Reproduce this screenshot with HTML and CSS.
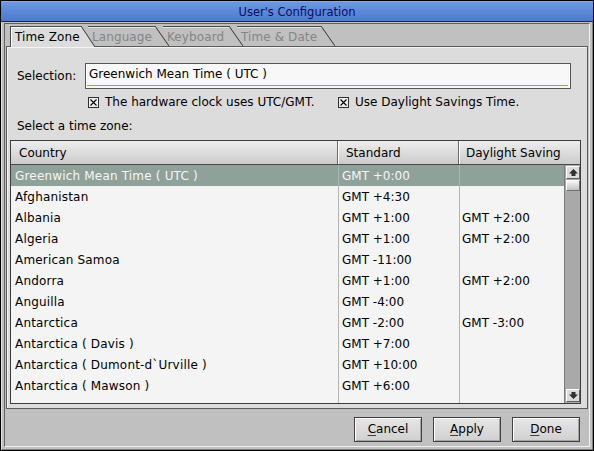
FILE: index.html
```html
<!DOCTYPE html>
<html>
<head>
<meta charset="utf-8">
<link rel="stylesheet" href="styles.css">
</head>
<body>
<div class="window">
  <div class="titlebar">User's Configuration</div>
  <div class="client">
    <div class="inner">
      <div class="tabs">
        <div class="tab active t1">Time Zone</div>
        <div class="tab t2">Language</div>
        <div class="tab t3">Keyboard</div>
        <div class="tab t4">Time &amp; Date</div>
      </div>
      <div class="panel">
        <div class="sel-row">
          <span class="label">Selection:</span>
          <div class="field"><div class="field-in">Greenwich Mean Time ( UTC )</div></div>
        </div>
        <div class="checks">
          <div class="check">
            <svg class="box" width="11" height="11" viewBox="0 0 11 11"><rect x="0.5" y="0.5" width="10" height="10" fill="#eeeeee" stroke="#303030"/><path d="M2.5 2.5 L8.5 8.5 M8.5 2.5 L2.5 8.5" stroke="#000" stroke-width="1.1"/></svg>
            <span>The hardware clock uses UTC/GMT.</span>
          </div>
          <div class="check">
            <svg class="box" width="11" height="11" viewBox="0 0 11 11"><rect x="0.5" y="0.5" width="10" height="10" fill="#eeeeee" stroke="#303030"/><path d="M2.5 2.5 L8.5 8.5 M8.5 2.5 L2.5 8.5" stroke="#000" stroke-width="1.1"/></svg>
            <span>Use Daylight Savings Time.</span>
          </div>
        </div>
        <div class="caption">Select a time zone:</div>
        <div class="table">
          <div class="thead">
            <div class="th c1">Country</div>
            <div class="th c2">Standard</div>
            <div class="th c3">Daylight Saving</div>
          </div>
          <div class="tbody">
            <div class="rows">
              <div class="row sel"><div class="td c1">Greenwich Mean Time ( UTC )</div><div class="td c2">GMT +0:00</div><div class="td c3"></div></div>
              <div class="row"><div class="td c1">Afghanistan</div><div class="td c2">GMT +4:30</div><div class="td c3"></div></div>
              <div class="row"><div class="td c1">Albania</div><div class="td c2">GMT +1:00</div><div class="td c3">GMT +2:00</div></div>
              <div class="row"><div class="td c1">Algeria</div><div class="td c2">GMT +1:00</div><div class="td c3">GMT +2:00</div></div>
              <div class="row"><div class="td c1">American Samoa</div><div class="td c2">GMT -11:00</div><div class="td c3"></div></div>
              <div class="row"><div class="td c1">Andorra</div><div class="td c2">GMT +1:00</div><div class="td c3">GMT +2:00</div></div>
              <div class="row"><div class="td c1">Anguilla</div><div class="td c2">GMT -4:00</div><div class="td c3"></div></div>
              <div class="row"><div class="td c1">Antarctica</div><div class="td c2">GMT -2:00</div><div class="td c3">GMT -3:00</div></div>
              <div class="row"><div class="td c1">Antarctica ( Davis )</div><div class="td c2">GMT +7:00</div><div class="td c3"></div></div>
              <div class="row"><div class="td c1">Antarctica ( Dumont-d`Urville )</div><div class="td c2">GMT +10:00</div><div class="td c3"></div></div>
              <div class="row"><div class="td c1">Antarctica ( Mawson )</div><div class="td c2">GMT +6:00</div><div class="td c3"></div></div>
              <div class="row"><div class="td c1"></div><div class="td c2"></div><div class="td c3"></div></div>
            </div>
            <div class="scrollbar">
              <div class="sb-btn"><svg width="9" height="7" viewBox="0 0 9 7"><path d="M4.5 0 L9 4.5 H6.5 V7 H2.5 V4.5 H0 Z" fill="#303030"/></svg></div>
              <div class="thumb"></div>
              <div class="sb-btn down"><svg width="9" height="7" viewBox="0 0 9 7"><path d="M4.5 7 L9 2.5 H6.5 V0 H2.5 V2.5 H0 Z" fill="#303030"/></svg></div>
            </div>
          </div>
        </div>
      </div>
      <div class="buttons">
        <div class="btn"><u>C</u>ancel</div>
        <div class="btn"><u>A</u>pply</div>
        <div class="btn"><u>D</u>one</div>
      </div>
    </div>
  </div>
</div>
</body>
</html>
```
FILE: styles.css
```css
* { box-sizing: border-box; }
body {
  margin: 0;
  font-family: "DejaVu Sans", "Verdana", sans-serif;
  font-size: 12px;
  color: #000;
  background: #000;
}
.window {
  width: 594px;
  height: 451px;
  border: 1px solid #000;
  background: #c0c0c0;
  display: flex;
  flex-direction: column;
}
.titlebar {
  flex: none;
  height: 21px;
  border-bottom: 1px solid #1e2a48;
  background: linear-gradient(#9ab8ee 0, #6e9ae2 1px, #5d8bda 45%, #4c7bcc 100%);
  color: #0c0c60;
  text-align: center;
  font-size: 11.5px;
  line-height: 20px;
  padding-top: 1px;
}
.client {
  flex: 1;
  display: flex;
  background: #c0c0c0;
  border-left: 1px solid #e0e0e0;
  border-right: 1px solid #808080;
  border-bottom: 1px solid #808080;
  padding: 1px 2px 2px 2px;
}
.inner {
  flex: 1;
  display: flex;
  flex-direction: column;
  border: 1px solid;
  border-color: #606060 #f0f0f0 #f0f0f0 #606060;
}
/* tabs */
.tabs {
  flex: none;
  display: flex;
  align-items: flex-start;
  height: 21px;
  margin-top: 2px;
  margin-bottom: -1px;
  padding-left: 5px;
  position: relative;
  z-index: 1;
}
.tab {
  position: relative;
  height: 20px;
  line-height: 19px;
  padding-top: 2px;
  color: #858585;
  white-space: nowrap;
  letter-spacing: 0.1px;
}
.tab::before {
  content: "";
  position: absolute;
  inset: 0;
  z-index: -1;
  background: #c0c0c0;
  border-top: 1px solid #4a4a4a;
  box-shadow: inset 0 1px 0 #e4e4e4;
  clip-path: polygon(0 0, calc(100% - 14px) 0, 100% 100%, 0 100%);
}
.tab::after {
  content: "";
  position: absolute;
  top: 0;
  right: 0;
  width: 14px;
  height: 100%;
  background: linear-gradient(to top right, transparent calc(50% - 0.9px), #3c3c3c 50%, transparent calc(50% + 0.9px));
}
.tab.active {
  height: 21px;
  color: #000;
}
.tab.active::before {
  background: #dcdcdc;
  border-left: 1px solid #4a4a4a;
  box-shadow: inset 1px 1px 0 #ffffff;
}
.t1 { width: 85px; padding-left: 5px; z-index: 4; }
.t2 { width: 81px; padding-left: 4px; margin-left: -7px; z-index: 3; }
.t3 { width: 80px; padding-left: 4px; margin-left: -6px; z-index: 2; }
.t4 { width: 98px; padding-left: 4px; margin-left: -6px; z-index: 1; }

/* panel */
.panel {
  flex: none;
  height: 363px;
  margin: 0 1px;
  background: #dcdcdc;
  border: 1px solid #5a5a5a;
  box-shadow: inset 1px 1px 0 #f4f4f4;
  position: relative;
}
.sel-row {
  display: flex;
  align-items: center;
  padding: 16px 0 0 10px;
}
.label {
  width: 68px;
  line-height: 24px;
}
.field {
  width: 486px;
  height: 26px;
  border: 1px solid #555555;
  background: #f8f8f8;
  padding: 0 2px 2px 1px;
}
.field-in {
  height: 22px;
  line-height: 21px;
  border-bottom: 1px solid #8c8ce6;
  padding-left: 2px;
}
.checks {
  display: grid;
  grid-template-columns: 250px auto;
  height: 13px;
  line-height: 13px;
  margin-top: 7px;
  padding-left: 81px;
}
.check {
  display: flex;
  align-items: center;
  gap: 6px;
}
.box { display: block; flex: none; margin-top: -1px; }
.caption {
  margin-top: 10px;
  line-height: 14px;
  padding-left: 10px;
}
/* table */
.table {
  margin: 7px 0 0 3px;
  width: 571px;
  height: 264px;
  border: 1px solid #3c3c3c;
  background: #f4f4f4;
  display: flex;
  flex-direction: column;
}
.thead {
  flex: none;
  display: flex;
  height: 24px;
  border-bottom: 1px solid #4a4a4a;
  background: linear-gradient(#eeeeee, #cbcbcb);
}
.th { line-height: 22px; padding-top: 1px; white-space: nowrap; }
.th.c1 { width: 327px; border-right: 1px solid #6a6a6a; padding-left: 8px; }
.th.c2 { width: 121px; border-left: 1px solid #ffffff; border-right: 1px solid #6a6a6a; padding-left: 7px; }
.th.c3 { flex: 1; border-left: 1px solid #ffffff; padding-left: 6px; }
.tbody {
  flex: 1;
  display: flex;
  overflow: hidden;
}
.rows { width: 553px; flex: none; }
.row { display: flex; height: 21px; line-height: 20px; padding-top: 1px; }
.td { white-space: nowrap; overflow: hidden; }
.td.c1 { width: 327px; padding-left: 4px; letter-spacing: 0.18px; }
.td.c2 { width: 121px; border-left: 1px solid #b4b4b4; padding-left: 3px; margin-top: -1px; padding-top: 1px; }
.td.c3 { width: 105px; border-left: 1px solid #b4b4b4; padding-left: 2px; margin-top: -1px; padding-top: 1px; }
.row.sel { background: #8ea29a; color: #f6f6f6; }
.row.sel .td.c2, .row.sel .td.c3 { border-left-color: #a8b8b2; }
.scrollbar {
  flex: 1;
  display: flex;
  flex-direction: column;
  background: #a9a9a9;
  border-left: 1px solid #7a7a7a;
}
.sb-btn {
  height: 13px;
  margin: 1px 0 0 1px;
  background: #dcdcdc;
  border: 1px solid;
  border-color: #ffffff #606060 #606060 #ffffff;
  display: flex;
  align-items: center;
  justify-content: center;
}
.sb-btn.down { margin-top: auto; margin-bottom: 1px; }
.thumb {
  height: 11px;
  margin: 1px 0 0 1px;
  background: linear-gradient(#f6f6f6, #c2c2c2);
  border: 1px solid;
  border-color: #ffffff #707070 #707070 #ffffff;
}
/* buttons */
.buttons {
  flex: 1;
  display: flex;
  justify-content: flex-end;
  align-items: flex-start;
  gap: 11px;
  padding: 8px 9px 0 0;
  background: #c0c0c0;
}
.btn {
  width: 68px;
  height: 25px;
  border: 1px solid #404040;
  background: linear-gradient(#e6e6e6, #d0d0d0);
  box-shadow: inset 1px 1px 0 #ffffff, inset -1px -1px 0 #a4a4a4;
  text-align: center;
  line-height: 23px;
}
.btn u { text-decoration-color: #404040; text-underline-offset: 2px; }
```
